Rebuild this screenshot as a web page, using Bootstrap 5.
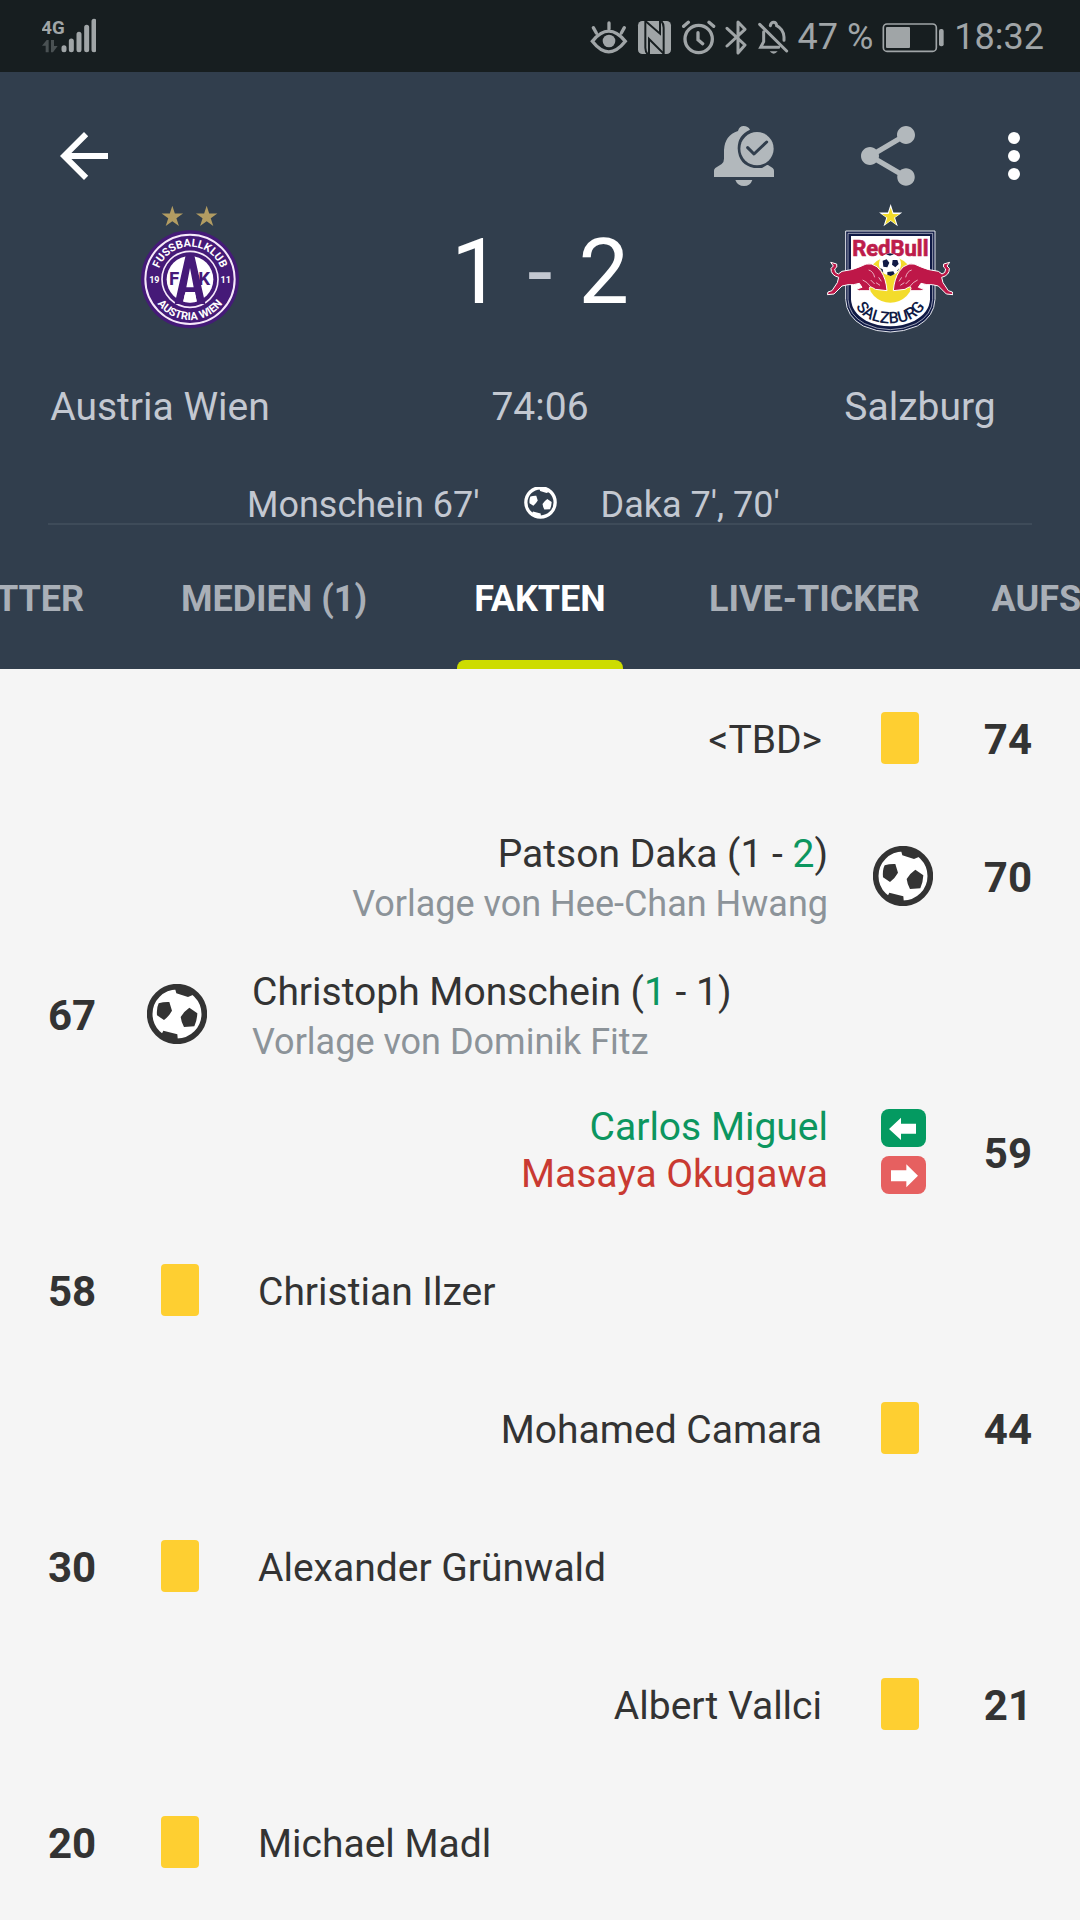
<!DOCTYPE html>
<html lang="de">
<head>
<meta charset="utf-8">
<meta name="viewport" content="width=device-width, initial-scale=1">
<title>Austria Wien - Salzburg</title>
<link href="https://cdn.jsdelivr.net/npm/bootstrap@5.3.0/dist/css/bootstrap.min.css" rel="stylesheet">
<style>
  body { font-family: Roboto, "Noto Sans", sans-serif; background: #f5f5f5; color: #333; overflow-x: hidden; }
  svg { display: block; flex: none; }
  .statusbar { height: 72px; background: #171e20; color: #a0a5a7; padding: 0 36px 0 42px; font-size: 36px; line-height: 72px; }
  .status-icons { gap: 9px; padding-top: 2px; }
  .match-head { background: #313e4d; color: #c3c8d1; }
  .toolbar { padding: 48px 30px 12px 48px; }
  .tool-btn { background: none; border: 0; padding: 0; color: #fff; }
  .tool-muted { color: #b2b8bc; }
  .tool-gap { gap: 72px; }
  .tool-more { margin-left: -18px; }
  .crest-col { flex: 0 0 380px; }
  .name-col { flex: 0 0 320px; }
  .score { font-size: 90px; line-height: 96px; gap: 26px; padding-top: 4px; }
  .score-num { color: #fff; }
  .names { font-size: 39px; line-height: 48px; padding-top: 45px; }
  .scorers { font-size: 36px; line-height: 36px; gap: 44px; margin: 56px 48px 0; border-bottom: 2px solid #3e4b59; }
  .tabs { overflow-x: auto; scrollbar-width: none; }
  .tabs::-webkit-scrollbar { display: none; }
  .tab-item { flex: none; min-width: 266px; padding: 4px 36px 0; font-size: 36px; line-height: 140px; font-weight: 700; text-align: center; white-space: nowrap; color: #a9afb7; text-decoration: none; position: relative; }
  .tab-item.active { color: #fff; }
  .tab-item.active::after { content: ""; position: absolute; left: 50px; right: 50px; bottom: 0; height: 9px; background: #cddc00; border-radius: 8px 8px 0 0; }
  .events { padding-top: 2px; }
  .event { min-height: 138px; padding: 0 48px; gap: 45px; font-size: 39px; line-height: 50px; }
  .minute { flex: 0 0 54px; font-size: 42px; font-weight: 700; }
  .event-away .minute { text-align: right; }
  .event-away { flex-direction: row-reverse; text-align: right; }
  .ev-icon { flex: 0 0 60px; display: flex; flex-direction: column; align-items: center; gap: 9px; padding-bottom: 4px; }
  .ev-icon-card { flex-basis: 66px; }
  .yellow-card { width: 38px; height: 52px; border-radius: 4px; background: #fecf31; }
  .goal-text { padding-top: 2px; }
  .assist { font-size: 36px; color: #8c9399; }
  .c-in { color: #0c965f; }
  .c-out { color: #c93a32; }
  .subs { line-height: 47px; }
  .sub-pad { padding-bottom: 6px; }
</style>
<script src="https://cdn.jsdelivr.net/npm/bootstrap@5.3.0/dist/js/bootstrap.bundle.min.js"></script>
</head>
<body>
<svg width="0" height="0" class="position-absolute" aria-hidden="true">
  <defs>
    <symbol id="ball" viewBox="639 468 180 180">
      <circle cx="729" cy="558" r="82" fill="#fff" stroke="#333" stroke-width="17"/>
      <path fill="#333" d="M674 526Q690 521 706 522L714 548Q704 566 690 576L669 562Q667 540 674 526ZM766 539L790 556Q789 578 781 595L750 597Q742 583 740 567Q752 548 766 539ZM722 478L727 496L762 507L778 500L770 484L740 474ZM678 628L688 608L730 619L732 642L700 640Z"/>
    </symbol>
    <symbol id="star" viewBox="0 0 24 24"><path d="M12 1l2.6 8h8.400l-6.800 4.900 2.600 8.100-6.800-5-6.800 5 2.600-8.100L1 9h8.400z"/></symbol>
  </defs>
</svg>

<header>
  <div class="statusbar d-flex justify-content-between align-items-center">
    <svg width="54" height="36" viewBox="122 54 162 108" fill="#a0a5a7" role="img" aria-label="4G">
      <text x="120" y="102" font-family="Roboto, sans-serif" font-size="56" font-weight="700">4G</text>
      <path stroke="#171e20" stroke-width="27" d="M210 123v26M233 103v46"/>
      <g stroke="#a0a5a7" stroke-width="15" stroke-linecap="round"><path d="M188 143v6M210 123v26M233 103v46M256 82v67M278 64v85"/></g>
      <path fill="#4a5153" d="M122 137l14-17h6v37h-9v-20zM149 120h9v18h11l-14 19h-6z"/>
    </svg>
    <div class="status-icons d-flex align-items-center">
      <svg width="38" height="36" viewBox="84 54 114 108" fill="none" stroke="#a0a5a7" stroke-width="10" stroke-linecap="round"><path d="M91 121Q140 60 190 121Q140 184 91 121ZM141 66v18M94 80l9 16M187 80l-9 16"/><circle cx="141" cy="120" r="19" fill="#a0a5a7" stroke="none"/></svg>
      <svg width="35" height="36" viewBox="228 54 105 108"><rect x="231" y="60" width="99" height="99" rx="13" fill="#a0a5a7"/><path fill="none" stroke="#171e20" stroke-width="6" d="M253 60V140Q253 152 260 160M308 160V80Q308 68 301 60"/><path fill="none" stroke="#171e20" stroke-width="6" d="M254 61L297 98V60M264 160V114L308 158"/></svg>
      <svg width="35" height="36" viewBox="363 54 105 108" fill="none" stroke="#a0a5a7" stroke-width="10" stroke-linecap="round"><circle cx="416" cy="114" r="41"/><path d="M414 95v21l14 12M371 76l14-12M461 76l-14-12"/></svg>
      <svg width="23" height="36" viewBox="498 54 69 108" fill="none" stroke="#a0a5a7" stroke-width="9" stroke-linejoin="round" stroke-linecap="round"><path d="M504 82l54 50-21 24V63l21 22-54 50"/></svg>
      <svg width="32" height="36" viewBox="600 54 96 108" fill="none" stroke="#a0a5a7" stroke-width="9" stroke-linecap="round"><path d="M608 70l81 80M620 92v30l-9 17h54M640 74q2-10 10-10q8 0 9 10q20 10 22 34v10"/><path d="M638 151h24q-12 14-24 0z" fill="#a0a5a7" stroke="none"/></svg>
      <span>47 %</span>
      <svg width="63" height="36" viewBox="969 54 189 108"><rect x="973" y="69" width="159" height="82" rx="11" fill="none" stroke="#a0a5a7" stroke-width="5"/><rect x="981" y="78" width="72" height="63" rx="3" fill="#a0a5a7"/><rect x="1140" y="84" width="14" height="52" rx="6" fill="#a0a5a7"/></svg>
      <span>18:32</span>
    </div>
  </div>

  <div class="match-head">
    <div class="toolbar d-flex justify-content-between">
      <button class="tool-btn" type="button" aria-label="Zurück"><svg width="72" height="72" viewBox="0 0 24 24" fill="currentColor"><path d="M20 11H7.800l5.600-5.600L12 4l-8 8 8 8 1.400-1.400L7.800 13H20z"/></svg></button>
      <div class="d-flex tool-gap">
        <button class="tool-btn tool-muted" type="button" aria-label="Benachrichtigungen"><svg width="72" height="72" viewBox="84 60 216 216" fill="currentColor"><path d="M102 231V212Q102 207 106 204L125 192Q132 187 132 176V150Q134 106 174 93Q178 78 191 78Q204 78 210 89Q173 105 173 145Q175 195 222 204H246L261 195H264L278 204Q282 207 282 212V231ZM166 240H217Q211 258 192 258Q173 258 166 240Z"/><circle cx="231" cy="146" r="50"/><path d="M203 143l19 19 38-36" fill="none" stroke="#313e4d" stroke-width="9" stroke-linecap="round" stroke-linejoin="round"/></svg></button>
        <button class="tool-btn tool-muted" type="button" aria-label="Teilen"><svg width="72" height="72" viewBox="0 0 24 24" fill="currentColor"><path d="M18 16.080c-.76 0-1.440.3-1.960.77L8.910 12.700c.05-.23.09-.46.09-.7s-.04-.47-.09-.7l7.050-4.110c.54.5 1.250.81 2.040.81 1.660 0 3-1.340 3-3s-1.340-3-3-3-3 1.340-3 3c0 .24.04.47.09.7L8.040 9.810C7.500 9.310 6.790 9 6 9c-1.660 0-3 1.340-3 3s1.340 3 3 3c.79 0 1.500-.31 2.040-.81l7.120 4.160c-.05.21-.08.43-.08.65 0 1.610 1.310 2.920 2.920 2.920s2.920-1.310 2.920-2.920-1.310-2.920-2.920-2.920z"/></svg></button>
        <button class="tool-btn tool-more" type="button" aria-label="Mehr"><svg width="72" height="72" viewBox="0 0 24 24" fill="currentColor"><circle cx="12" cy="6" r="2"/><circle cx="12" cy="12" r="2"/><circle cx="12" cy="18" r="2"/></svg></button>
      </div>
    </div>

    <div class="d-flex justify-content-between align-items-center">
      <div class="crest-col d-flex justify-content-center">
        <svg width="126" height="134" viewBox="21 12 378 402" font-family="Roboto, sans-serif" font-weight="700" role="img" aria-label="FK Austria Wien">
          <use href="#star" x="122" y="14" width="70" height="70" fill="#b29c62"/>
          <use href="#star" x="225" y="14" width="70" height="70" fill="#b29c62"/>
          <circle cx="210" cy="238" r="147" fill="#451a78"/>
          <circle cx="210" cy="238" r="134" fill="none" stroke="#f6e9fa" stroke-width="6"/>
          <circle cx="210" cy="238" r="84" fill="none" stroke="#f6e9fa" stroke-width="5"/>
          <circle cx="210" cy="238" r="70" fill="#fff"/>
          <path fill="#451a78" d="M197 166H223L256 312H232L226 284H194L188 312H164Z"/>
          <path fill="#fff" d="M210 204L221 262H199ZM196 276H225L230 304Q210 310 190 304Z"/>
          <text x="147" y="255" font-size="56" fill="#451a78">F</text>
          <text x="235" y="255" font-size="56" fill="#451a78">K</text>
          <g fill="#fff" font-size="27">
            <text x="103" y="249" text-anchor="middle">19</text><text x="317" y="249" text-anchor="middle">11</text>
          </g>
          <g fill="#fff" font-size="33">
            <path id="arcTop" d="M112 238A98 98 0 0 1 308 238" fill="none"/>
            <path id="arcBottom" d="M88 238A122 122 0 0 0 332 238" fill="none"/>
            <text text-anchor="middle"><textPath href="#arcTop" startOffset="50%">FUSSBALLKLUB</textPath></text>
            <text text-anchor="middle"><textPath href="#arcBottom" startOffset="50%">AUSTRIA WIEN</textPath></text>
          </g>
        </svg>
      </div>
      <div class="score d-flex"><span class="score-num">1</span><span>-</span><span class="score-num">2</span></div>
      <div class="crest-col d-flex justify-content-center">
        <svg width="126" height="134" viewBox="21 12 378 402" font-family="Roboto, sans-serif" role="img" aria-label="Red Bull Salzburg">
          <use href="#star" x="174" y="9" width="76" height="76" fill="#fff"/>
          <use href="#star" x="183" y="20" width="58" height="58" fill="#f3dc2b"/>
          <path d="M77 93H345V298Q343 350 292 378Q250 396 211 396Q170 396 130 378Q79 350 77 298Z" fill="#101a45" stroke="#e6e8ee" stroke-width="3"/>
          <path d="M84 100H338V298Q336 345 288 371Q250 389 211 389Q170 389 134 371Q86 345 84 298Z" fill="none" stroke="#dfe2ea" stroke-width="2"/>
          <path d="M93 108H330V298Q328 338 284 362Q248 379 211 379Q172 379 138 362Q95 338 93 298Z" fill="#fff"/>
          <circle cx="211" cy="239" r="69" fill="#f3dc2b"/>
          <text x="211" y="168" font-size="66" font-weight="700" fill="#bd1c4b" stroke="#bd1c4b" stroke-width="2" text-anchor="middle">RedBull</text>
          <g id="bull">
            <path fill="#be1748" stroke="#fff" stroke-width="3" stroke-linejoin="round" d="M32 187L50 192Q54 202 44 207Q44 220 55 222L66 214Q100 210 120 200Q140 188 154 192Q174 198 183 214Q198 236 201 272L166 268Q158 262 150 260Q146 264 150 272L118 272L108 268L126 262L118 250Q100 256 84 254L66 258L42 282L22 284L24 276L36 272L52 248L56 232Q32 226 33 205L40 198Z"/>
            <path fill="none" stroke="#fff" stroke-width="2" d="M146 210Q160 214 164 232M128 240Q142 246 150 258M168 248l12 8M176 232l8 12M152 240l12 12"/>
          </g>
          <use href="#bull" transform="translate(421 0) scale(-1 1)"/>
          <circle cx="210" cy="193" r="33" fill="#fff"/>
          <path fill="#101a45" d="M188 182l12-4 8 10-6 14-12-2zM218 180l14 0 4 12-10 10-10-8zM202 216l18-2 4 8-12 6-10-4zM180 204l6 10 4 4-2-10zM198 163l12-3 12 3-12 4zM238 204l-4 8-4 2z"/>
          <path id="arcSbg" d="M98 296Q118 368 211 370Q304 368 324 296" fill="none"/>
          <text font-size="48" font-weight="500" fill="#101a45" text-anchor="middle"><textPath href="#arcSbg" startOffset="50%">SALZBURG</textPath></text>
        </svg>
      </div>
    </div>

    <div class="names d-flex justify-content-between text-center">
      <div class="name-col">Austria Wien</div>
      <div>74:06</div>
      <div class="name-col">Salzburg</div>
    </div>

    <div class="scorers d-flex">
      <div class="col text-end">Monschein 67'</div>
      <svg width="33" height="33" viewBox="639 474 180 180"><circle cx="729" cy="558" r="80" fill="none" stroke="#fff" stroke-width="18"/><path fill="#fff" d="M674 526Q690 521 706 522L714 548Q704 566 690 576L669 562Q667 540 674 526ZM766 539L790 556Q789 578 781 595L750 597Q742 583 740 567Q752 548 766 539ZM722 478L727 496L762 507L778 500L770 484L740 474ZM678 628L688 608L730 619L732 642L700 640Z"/></svg>
      <div class="col">Daka 7', 70'</div>
    </div>

    <nav class="tabs d-flex position-relative" id="tabs">
      <a class="tab-item" href="#">TWITTER</a>
      <a class="tab-item" href="#">MEDIEN (1)</a>
      <a class="tab-item active" href="#" aria-current="page">FAKTEN</a>
      <a class="tab-item" href="#">LIVE-TICKER</a>
      <a class="tab-item" href="#">AUFSTELLUNG</a>
    </nav>
  </div>
</header>

<main class="events">
  <div class="event event-away d-flex align-items-center">
    <div class="minute">74</div><div class="ev-icon ev-icon-card"><span class="yellow-card"></span></div><div>&lt;TBD&gt;</div>
  </div>
  <div class="event event-away d-flex align-items-center">
    <div class="minute">70</div><div class="ev-icon"><svg width="60" height="60"><use href="#ball"/></svg></div>
    <div class="goal-text"><div>Patson Daka (1 - <span class="c-in">2</span>)</div><div class="assist">Vorlage von Hee-Chan Hwang</div></div>
  </div>
  <div class="event d-flex align-items-center">
    <div class="minute">67</div><div class="ev-icon"><svg width="60" height="60"><use href="#ball"/></svg></div>
    <div class="goal-text"><div>Christoph Monschein (<span class="c-in">1</span> - 1)</div><div class="assist">Vorlage von Dominik Fitz</div></div>
  </div>
  <div class="event event-away d-flex align-items-center">
    <div class="minute">59</div>
    <div class="ev-icon sub-pad">
      <svg width="45" height="38" viewBox="660 1254 135 114"><rect x="660" y="1254" width="135" height="114" rx="24" fill="#049a61"/><path fill="#fff" d="M684 1314L720 1280V1298H765V1328H720V1347Z"/></svg>
      <svg width="45" height="38" viewBox="660 1396 135 114"><rect x="660" y="1396" width="135" height="114" rx="24" fill="#e66060"/><path fill="#fff" d="M771 1455L736 1421V1439H690V1472H736V1490Z"/></svg>
    </div>
    <div class="subs sub-pad"><div class="c-in">Carlos Miguel</div><div class="c-out">Masaya Okugawa</div></div>
  </div>
  <div class="event d-flex align-items-center">
    <div class="minute">58</div><div class="ev-icon ev-icon-card"><span class="yellow-card"></span></div><div>Christian Ilzer</div>
  </div>
  <div class="event event-away d-flex align-items-center">
    <div class="minute">44</div><div class="ev-icon ev-icon-card"><span class="yellow-card"></span></div><div>Mohamed Camara</div>
  </div>
  <div class="event d-flex align-items-center">
    <div class="minute">30</div><div class="ev-icon ev-icon-card"><span class="yellow-card"></span></div><div>Alexander Grünwald</div>
  </div>
  <div class="event event-away d-flex align-items-center">
    <div class="minute">21</div><div class="ev-icon ev-icon-card"><span class="yellow-card"></span></div><div>Albert Vallci</div>
  </div>
  <div class="event d-flex align-items-center">
    <div class="minute">20</div><div class="ev-icon ev-icon-card"><span class="yellow-card"></span></div><div>Michael Madl</div>
  </div>
</main>
<script>
  // Keep the active tab in the middle of the strip.
  const tabs = document.getElementById('tabs');
  const active = tabs.querySelector('.active');
  tabs.scrollLeft = active.offsetLeft - (tabs.clientWidth - active.offsetWidth) / 2;
</script>
</body>
</html>
